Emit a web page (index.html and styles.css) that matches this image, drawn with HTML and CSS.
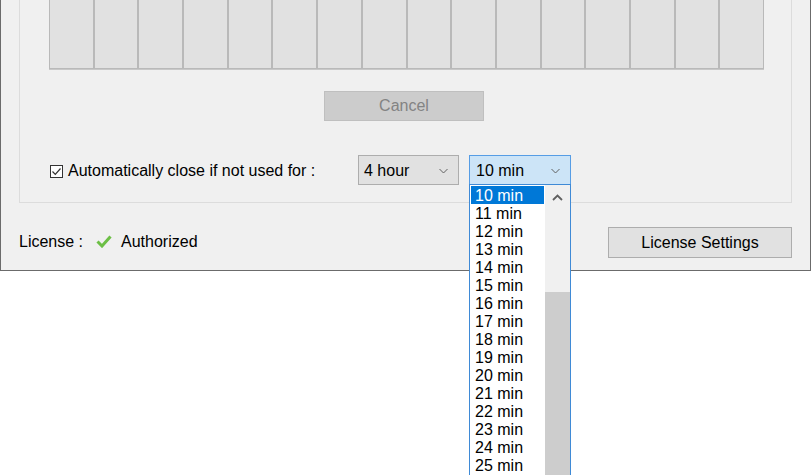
FILE: index.html
```html
<!DOCTYPE html>
<html lang="en">

<head>
    <meta charset="UTF-8">
    <meta name="viewport" content="width=device-width, initial-scale=1.0">
    <title>Settings</title>
    <link rel="stylesheet" href="styles.css">
</head>

<body>

    <div class="window">
        <div class="group">
            <div class="slots">
                <div class="slot"></div><div class="slot"></div><div class="slot"></div><div class="slot"></div>
                <div class="slot"></div><div class="slot"></div><div class="slot"></div><div class="slot"></div>
                <div class="slot"></div><div class="slot"></div><div class="slot"></div><div class="slot"></div>
                <div class="slot"></div><div class="slot"></div><div class="slot"></div><div class="slot"></div>
            </div>

            <button class="btn btn--disabled cancel-btn">Cancel</button>

            <div class="close-row">
                <label class="close-row__label">
                    <span class="checkbox">
                        <svg width="11" height="11" viewBox="0 0 11 11">
                            <path d="M1.5 5.5 L4.3 8.3 L9.5 2.5" fill="none" stroke="#333" stroke-width="1.2"/>
                        </svg>
                    </span>
                    Automatically close if not used for :
                </label>
                <div class="combo combo--hour">
                    <span>4 hour</span>
                    <svg class="combo__arrow" width="9" height="6" viewBox="0 0 9 6">
                        <path d="M0.5 1 L4.5 5 L8.5 1" fill="none" stroke="#606060" stroke-width="1"/>
                    </svg>
                </div>
                <div class="combo combo--open">
                    <span>10 min</span>
                    <svg class="combo__arrow" width="9" height="6" viewBox="0 0 9 6">
                        <path d="M0.5 1 L4.5 5 L8.5 1" fill="none" stroke="#606060" stroke-width="1"/>
                    </svg>
                </div>
            </div>
        </div>

        <div class="license">
            <div class="license__status">
                <span>License :</span>
                <svg class="license__check" width="16" height="13" viewBox="0 0 16 13">
                    <path d="M1.5 6.5 L6 11 L14.5 1.5" fill="none" stroke="#6cbf45" stroke-width="3"/>
                </svg>
                <span>Authorized</span>
            </div>
            <button class="btn license__btn">License Settings</button>
        </div>
    </div>

    <div class="dropdown">
        <ul class="dropdown__list">
            <li class="dropdown__item dropdown__item--active">10 min</li>
            <li class="dropdown__item">11 min</li>
            <li class="dropdown__item">12 min</li>
            <li class="dropdown__item">13 min</li>
            <li class="dropdown__item">14 min</li>
            <li class="dropdown__item">15 min</li>
            <li class="dropdown__item">16 min</li>
            <li class="dropdown__item">17 min</li>
            <li class="dropdown__item">18 min</li>
            <li class="dropdown__item">19 min</li>
            <li class="dropdown__item">20 min</li>
            <li class="dropdown__item">21 min</li>
            <li class="dropdown__item">22 min</li>
            <li class="dropdown__item">23 min</li>
            <li class="dropdown__item">24 min</li>
            <li class="dropdown__item">25 min</li>
        </ul>
        <div class="dropdown__scroll">
            <svg class="dropdown__up" width="11" height="7" viewBox="0 0 11 7">
                <path d="M1 6 L5.5 1.5 L10 6" fill="none" stroke="#606060" stroke-width="1.8"/>
            </svg>
            <div class="dropdown__thumb"></div>
        </div>
    </div>

</body>

</html>
```

FILE: styles.css
```css
body {
    margin: 0;
    width: 811px;
    height: 475px;
    overflow: hidden;
    background-color: #fff;
    font-family: "Liberation Sans", Arial, sans-serif;
    font-size: 16px;
    color: #000;
    position: relative;
}

.window {
    display: flow-root;
    width: 811px;
    height: 271px;
    box-sizing: border-box;
    background-color: #f0f0f0;
    border: 1px solid #6b6b6b;
    border-top: none;
    padding: 0 18px 0 18px;
}

.group {
    margin-top: -30px;
    border: 1px solid #dcdcdc;
    padding: 0 27px 18px 29px;
    height: 233px;
    box-sizing: border-box;
}

.slots {
    display: grid;
    grid-template-columns: repeat(16, 1fr);
    height: 98px;
    border-bottom: 1px solid #c8c8c8;
}

.slot {
    background-color: #e1e1e1;
    border: 1px solid #b9b9b9;
}

.btn {
    font-family: "Liberation Sans", Arial, sans-serif;
    font-size: 16px;
    background-color: #e1e1e1;
    border: 1px solid #adadad;
    color: #000;
    padding: 0;
    height: 31px;
    display: block;
}

.btn--disabled {
    background-color: #cccccc;
    border-color: #bfbfbf;
    color: #838383;
}

.cancel-btn {
    width: 160px;
    height: 30px;
    margin: 21px 0 0 275px;
}

.close-row {
    display: flex;
    align-items: center;
    margin-top: 34px;
}

.close-row__label {
    width: 308px;
    display: flex;
    align-items: center;
    gap: 5px;
    margin-left: 1px;
    padding-top: 2px;
}

.checkbox {
    width: 11px;
    height: 11px;
    border: 1px solid #333;
    background-color: #fff;
    display: flex;
}

.combo {
    height: 30px;
    box-sizing: border-box;
    border: 1px solid #adadad;
    background-color: #e1e1e1;
    display: flex;
    align-items: center;
    justify-content: space-between;
    padding: 1px 10px 0 5px;
}

.combo--hour {
    width: 101px;
}

.combo--open {
    width: 102px;
    margin-left: 10px;
    border-color: #569de5;
    background-color: #cce4f7;
    padding-left: 6px;
}

.license {
    display: flex;
    justify-content: space-between;
    align-items: center;
    margin-top: 24px;
}

.license__status {
    display: flex;
    align-items: center;
    margin-top: -2px;
}

.license__check {
    margin: 0 9px 0 13px;
}

.license__btn {
    width: 184px;
}

.dropdown {
    position: absolute;
    left: 469px;
    top: 184px;
    width: 102px;
    height: 300px;
    box-sizing: border-box;
    border: 1px solid #3f8ad6;
    background-color: #fff;
    display: flex;
}

.dropdown__list {
    list-style: none;
    margin: 0;
    padding: 1px 0 0 1px;
    width: 73px;
}

.dropdown__item {
    height: 18px;
    line-height: 19px;
    padding-left: 4px;
}

.dropdown__item--active {
    background-color: #0078d7;
    color: #fff;
}

.dropdown__scroll {
    flex: 1;
    margin-left: 1px;
    background-color: #f0f0f0;
    display: flex;
    flex-direction: column;
    align-items: center;
}

.dropdown__up {
    margin-top: 9px;
}

.dropdown__thumb {
    width: 25px;
    margin-top: 91px;
    flex: 1;
    background-color: #cdcdcd;
}
```
